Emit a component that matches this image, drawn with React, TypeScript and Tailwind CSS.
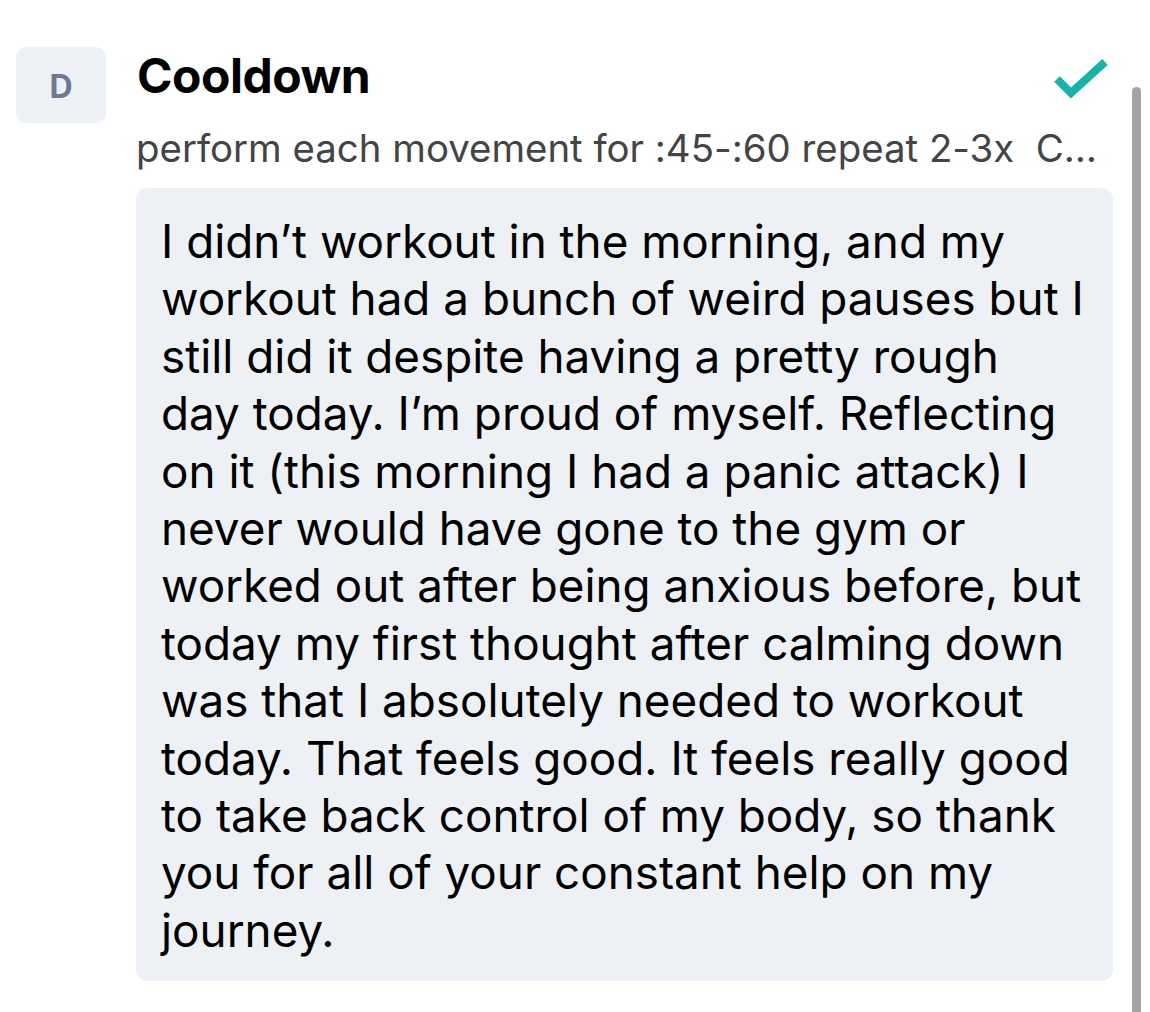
const lines = [
  'I didn’t workout in the morning, and my',
  'workout had a bunch of weird pauses but I',
  'still did it despite having a pretty rough',
  'day today. I’m proud of myself. Reflecting',
  'on it (this morning I had a panic attack) I',
  'never would have gone to the gym or',
  'worked out after being anxious before, but',
  'today my first thought after calming down',
  'was that I absolutely needed to workout',
  'today. That feels good. It feels really good',
  'to take back control of my body, so thank',
  'you for all of your constant help on my',
  'journey.',
]

function CheckMark() {
  return (
    <svg width="58" height="46" viewBox="0 0 58 46" fill="none" className="shrink-0">
      <polyline points="5,24 19,38 53,7" stroke="#16b3a9" strokeWidth="8" strokeLinejoin="miter" />
    </svg>
  )
}

export default function App() {
  return (
    <div className="relative h-[1012px] w-[1150px] overflow-hidden bg-white font-['Inter',sans-serif] [font-feature-settings:'calt'_0]">
      <div className="flex gap-[30px] pl-4 pr-[37px] pt-[47px]">
        <div className="flex h-[76px] w-[90px] shrink-0 items-center justify-center rounded-[10px] bg-[#edf1f6] pt-1 text-[32px] font-bold text-[#6c7a91]">
          D
        </div>
        <div className="min-w-0 flex-1">
          <div className="flex items-start justify-between">
            <h1 className="pl-[1px] text-[48px] font-bold leading-[58px] tracking-[-0.01em] text-black">Cooldown</h1>
            <div className="mr-[3px] mt-[8px]">
              <CheckMark />
            </div>
          </div>
          <p className="mt-5 whitespace-nowrap text-[38.4px] leading-[46px] text-[#444446]">
            perform each movement for :45-:60 repeat 2-3x&nbsp; C…
          </p>
          <div className="mt-[17px] rounded-[12px] bg-[#edf1f5] pb-[22px] pl-[25px] pr-5 pt-[25px]">
            <p className="whitespace-nowrap text-[45.8px] leading-[57.4px] text-black">
              {lines.map((line, i) => (
                <span key={i}>
                  {line}
                  {i < lines.length - 1 && <br />}
                </span>
              ))}
            </p>
          </div>
        </div>
      </div>
      <div className="absolute right-[9px] top-[87px] h-[940px] w-[9px] rounded-full bg-[#a3a3a3]" />
    </div>
  )
}
